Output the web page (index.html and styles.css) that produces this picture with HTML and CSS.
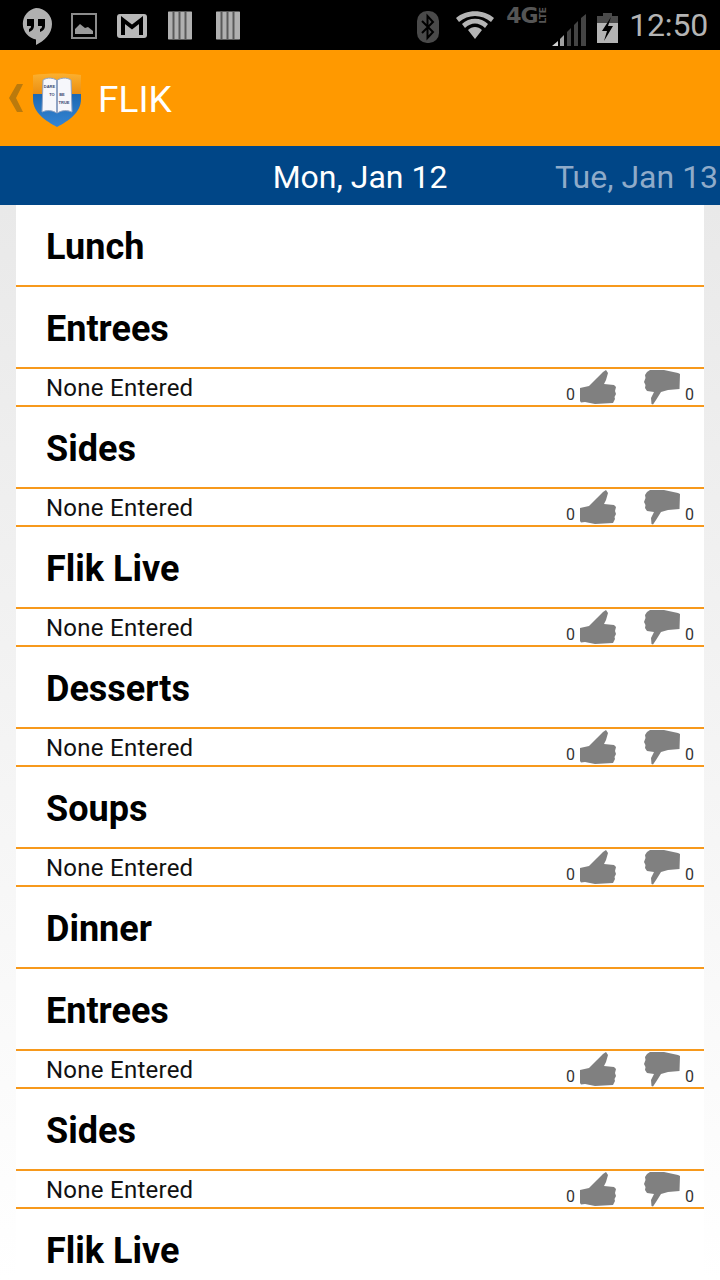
FILE: index.html
```html
<!DOCTYPE html>
<html lang="en">
<head>
	<meta charset="UTF-8">
	<meta name="viewport" content="width=device-width, initial-scale=1">
	<title>FLIK</title>
	<link rel="stylesheet" href="styles.css">
</head>
<body>
	<svg class="defs" width="0" height="0">
		<symbol id="up" viewBox="0 0 36 35">
			<path d="M0 31V18L9 16L17 8L23 2L26 0L28 3L26 10L24 14L34 15L36 17L35 21L36 24L34.500 27L35 29L33 33L15 34L5 32L1 32.500Z"/>
		</symbol>
		<symbol id="down" viewBox="0 0 36 35">
			<path d="M6 0L20 0L34 3L36 4L35.500 19L24 20L17 22L12 30L9 34.500L7.500 34L7 28L10 22L3 21L1 18L1.500 15L0 12L1.500 8L1 5L3 2Z"/>
		</symbol>
		<symbol id="sim" viewBox="0 0 24 29">
			<rect width="24" height="29" rx="1" fill="#5a5a5a"/>
			<path fill="#b0b0b0" d="M0 1H4.500V28H0ZM6.500 1H10.500V28H6.500ZM12.500 1H16.500V28H12.500ZM18.500 1H24V28H18.500Z"/>
		</symbol>
	</svg>

	<div class="statusbar">
		<div class="status-left">
			<svg class="ico-hangouts" viewBox="0 0 32 37"><path fill="#b0b0b0" d="M16 0A16 16 0 0 0 16 31.500V37C24 33 32 26 32 16A16 16 0 0 0 16 0Z"/><path fill="#000" d="M7 11H14V18C14 21 12 23 9 24V21C10.500 20.500 11 19.500 11 18H7ZM18 11H25V18C25 21 23 23 20 24V21C21.500 20.500 22 19.500 22 18H18Z"/></svg>
			<svg class="ico-photo" viewBox="0 0 26 26"><path fill="none" stroke="#8c8c8c" stroke-width="2" d="M1 1H25V25H1Z"/><path fill="#9a9a9a" d="M4 21V16L9 11L14 15L17 14L22 18V21Z"/></svg>
			<svg class="ico-gmail" viewBox="0 0 30 24"><rect width="30" height="24" rx="3" fill="#b8b8b8"/><path fill="none" stroke="#000" stroke-width="4" d="M6 21V6L15 13L24 6V21"/></svg>
			<svg class="ico-sim"><use href="#sim"/></svg>
			<svg class="ico-sim"><use href="#sim"/></svg>
		</div>
		<div class="status-right">
			<svg class="ico-bt" viewBox="0 0 22 32"><rect width="22" height="32" rx="10" fill="#4a4a4a"/><path fill="none" stroke="#000" stroke-width="2" d="M5 10L16 21L10.500 27V5L16 11L5 22"/></svg>
			<svg class="ico-wifi" viewBox="0 0 38 30"><path fill="#b4b4b4" d="M0 9C10 0 28 0 38 9L35 13C26 5 12 5 3 13ZM6 15C13 8 25 8 32 15L29 19C23 13 15 13 9 19ZM12 21C16 17 22 17 26 21L19 30Z"/></svg>
			<span class="net"><span class="net-4g">4G</span><span class="net-lte">LTE</span></span>
			<svg class="ico-signal" viewBox="0 0 34 32"><path fill="#d0d0d0" d="M0 32L6 27V32Z"/><path fill="#a0a0a0" d="M8 25L12 21V32H8Z"/><path fill="#444" d="M15 18L19 14V32H15ZM22 11L26 7V32H22ZM29 4L34 0V32H29Z"/></svg>
			<svg class="ico-batt" viewBox="0 0 21 30"><path fill="#4a4a4a" d="M6 0H15V3H21V10H0V3H6Z"/><path fill="#b4b4b4" d="M0 10H21V30H0Z"/><path fill="#000" d="M14 4L5 18H10L7 28L16 13H11Z"/></svg>
			<span class="clock">12:50</span>
		</div>
	</div>

	<header class="appbar">
		<svg class="back" viewBox="0 0 14 28"><path fill="#bb7a0c" d="M8 0H14L7 14L14 28H8L0 14Z"/></svg>
		<svg class="logo" viewBox="0 0 50 54">
			<defs>
				<linearGradient id="shield-top" x1="0" y1="0" x2="0" y2="1">
					<stop offset="0" stop-color="#fbb030"/>
					<stop offset="1" stop-color="#e98c10"/>
				</linearGradient>
				<linearGradient id="shield-bottom" x1="0" y1="0" x2="0" y2="1">
					<stop offset="0" stop-color="#1c68b2"/>
					<stop offset="1" stop-color="#3585d4"/>
				</linearGradient>
			</defs>
			<path fill="url(#shield-top)" d="M1 2C16 0 34 0 49 2V22H1Z"/>
			<path fill="url(#shield-bottom)" d="M1 21H49V26C49 40 36 48 25 54C14 48 1 40 1 26Z"/>
			<path fill="#f6f7fb" stroke="#8fa3c4" stroke-width="1" d="M11 7C16 4 21 5 24.500 7V40C20 37 15 37 10 39ZM25.500 7C29 5 34 4 39 7L40 39C35 37 30 37 25.500 40Z"/>
			<text class="logo-text" x="17.500" y="15">DARE</text>
			<text class="logo-text" x="20" y="23">TO</text>
			<text class="logo-text" x="30" y="23">BE</text>
			<text class="logo-text" x="32" y="31">TRUE</text>
		</svg>
		<h1 class="title">FLIK</h1>
	</header>

	<nav class="datebar">
		<span class="date date-current">Mon, Jan 12</span>
		<span class="date date-next">Tue, Jan 13</span>
	</nav>

	<main class="menu">
		<div class="heading">Lunch</div>
		<div class="heading">Entrees</div>
		<div class="item">
			<span class="item-name">None Entered</span>
			<div class="votes">
				<span class="count">0</span><svg class="thumb up"><use href="#up"/></svg>
				<svg class="thumb down"><use href="#down"/></svg><span class="count">0</span>
			</div>
		</div>
		<div class="heading">Sides</div>
		<div class="item">
			<span class="item-name">None Entered</span>
			<div class="votes">
				<span class="count">0</span><svg class="thumb up"><use href="#up"/></svg>
				<svg class="thumb down"><use href="#down"/></svg><span class="count">0</span>
			</div>
		</div>
		<div class="heading">Flik Live</div>
		<div class="item">
			<span class="item-name">None Entered</span>
			<div class="votes">
				<span class="count">0</span><svg class="thumb up"><use href="#up"/></svg>
				<svg class="thumb down"><use href="#down"/></svg><span class="count">0</span>
			</div>
		</div>
		<div class="heading">Desserts</div>
		<div class="item">
			<span class="item-name">None Entered</span>
			<div class="votes">
				<span class="count">0</span><svg class="thumb up"><use href="#up"/></svg>
				<svg class="thumb down"><use href="#down"/></svg><span class="count">0</span>
			</div>
		</div>
		<div class="heading">Soups</div>
		<div class="item">
			<span class="item-name">None Entered</span>
			<div class="votes">
				<span class="count">0</span><svg class="thumb up"><use href="#up"/></svg>
				<svg class="thumb down"><use href="#down"/></svg><span class="count">0</span>
			</div>
		</div>
		<div class="heading">Dinner</div>
		<div class="heading">Entrees</div>
		<div class="item">
			<span class="item-name">None Entered</span>
			<div class="votes">
				<span class="count">0</span><svg class="thumb up"><use href="#up"/></svg>
				<svg class="thumb down"><use href="#down"/></svg><span class="count">0</span>
			</div>
		</div>
		<div class="heading">Sides</div>
		<div class="item">
			<span class="item-name">None Entered</span>
			<div class="votes">
				<span class="count">0</span><svg class="thumb up"><use href="#up"/></svg>
				<svg class="thumb down"><use href="#down"/></svg><span class="count">0</span>
			</div>
		</div>
		<div class="heading">Flik Live</div>
	</main>
</body>
</html>
```

FILE: styles.css
```css
* {
	margin: 0;
	padding: 0;
	box-sizing: border-box;
}

html, body {
	height: 1280px;
	overflow: hidden;
}

body {
	display: flex;
	flex-direction: column;
	font-family: Roboto, sans-serif;
	background: #fff;
}

.defs {
	display: block;
	height: 0;
}

/* status bar */
.statusbar {
	height: 50px;
	flex: none;
	display: flex;
	justify-content: space-between;
	background: #000;
}

.status-left {
	display: flex;
	align-items: center;
	padding-left: 20px;
}

.ico-hangouts {
	width: 32px;
	height: 37px;
	margin-top: 3px;
	margin-right: 19px;
}

.ico-photo {
	width: 26px;
	height: 26px;
	margin-right: 20px;
	margin-top: 1px;
}

.ico-gmail {
	width: 30px;
	height: 24px;
	margin-right: 21px;
	margin-top: 1px;
}

.ico-sim {
	width: 24px;
	height: 29px;
	margin-right: 24px;
}

.status-right {
	display: flex;
	align-items: center;
	padding-right: 12px;
}

.ico-bt {
	width: 22px;
	height: 32px;
	margin-right: 17px;
	margin-top: 3px;
}

.ico-wifi {
	width: 38px;
	height: 30px;
	margin-right: 12px;
	margin-top: -2px;
}

.net {
	display: flex;
	align-items: flex-start;
	align-self: flex-start;
	margin-top: 7px;
	width: 46px;
	color: #555;
	font-family: "DejaVu Sans", sans-serif;
	font-weight: 700;
}

.net-4g {
	font-size: 22px;
	line-height: 18px;
	letter-spacing: -1px;
}

.net-lte {
	font-size: 9px;
	line-height: 10px;
	writing-mode: vertical-rl;
	transform: rotate(180deg);
}

.ico-signal {
	width: 34px;
	height: 32px;
	margin-right: 11px;
	margin-top: 9px;
}

.ico-batt {
	width: 21px;
	height: 30px;
	margin-right: 11px;
	margin-top: 6px;
}

.clock {
	font-size: 32px;
	line-height: 50px;
	letter-spacing: -.2px;
	color: #b4b4b4;
}

/* app bar */
.appbar {
	height: 96px;
	flex: none;
	display: flex;
	align-items: center;
	padding-left: 9px;
	background: #ff9900;
}

.back {
	width: 14px;
	height: 28px;
	margin-right: 9px;
	margin-top: -1px;
}

.logo {
	width: 50px;
	height: 54px;
	margin-top: 3px;
}

.logo-text {
	font-family: "Liberation Sans", sans-serif;
	font-size: 4px;
	font-weight: 700;
	fill: #3a4a70;
	text-anchor: middle;
}

.title {
	margin-left: 16px;
	padding-top: 2px;
	font-size: 37px;
	font-weight: 400;
	color: #fff;
}

/* date strip */
.datebar {
	height: 59px;
	flex: none;
	position: relative;
	display: flex;
	justify-content: center;
	align-items: center;
	padding-top: 2px;
	background: #004687;
	font-size: 32px;
	white-space: nowrap;
	overflow: hidden;
}

.date-current {
	color: #fff;
}

.date-next {
	position: absolute;
	left: 555px;
	color: #8fabc9;
}

/* menu list */
.menu {
	flex: 1;
	padding: 0 16px;
	background: linear-gradient(#e9e9e9, #fff);
	overflow: hidden;
}

.heading {
	height: 82px;
	padding: 0 30px;
	font-size: 36px;
	font-weight: 700;
	line-height: 84px;
	color: #000;
	background: #fff;
	border-bottom: 2px solid #f7991c;
}

.item {
	height: 38px;
	display: flex;
	justify-content: space-between;
	padding: 0 10px 0 30px;
	background: #fff;
	border-bottom: 2px solid #f7991c;
}

.item-name {
	font-size: 24px;
	line-height: 38px;
	letter-spacing: .25px;
	color: #111;
}

.votes {
	display: flex;
	align-items: flex-start;
}

.count {
	margin-top: 16px;
	font-size: 16px;
	line-height: 20px;
	color: #333;
}

.thumb {
	width: 36px;
	height: 35px;
	margin-top: 1px;
	fill: #808080;
}

.thumb.up {
	margin-left: 5px;
	margin-right: 28px;
}

.thumb.down {
	margin-right: 5px;
}
```
